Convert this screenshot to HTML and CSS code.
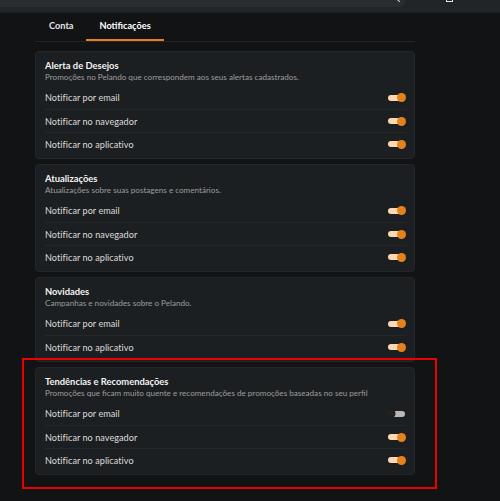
FILE: index.html
```html
<!DOCTYPE html>
<html lang="pt-BR">
<head>
<meta charset="utf-8">
<title>Notificações</title>
<link rel="stylesheet" href="styles.css">
</head>
<body>
<header class="topbar">
  <div class="search"><span class="search-clear"></span></div>
  <span class="top-icon"></span>
</header>

<main class="settings">
  <nav class="tabs">
    <a class="tab">Conta</a>
    <a class="tab tab-active">Notificações</a>
  </nav>

  <section class="card">
    <h2 class="card-title">Alerta de Desejos</h2>
    <p class="card-desc">Promoções no Pelando que correspondem aos seus alertas cadastrados.</p>
    <ul class="rows">
      <li class="row"><span>Notificar por email</span><span class="switch on"></span></li>
      <li class="row"><span>Notificar no navegador</span><span class="switch on"></span></li>
      <li class="row"><span>Notificar no aplicativo</span><span class="switch on"></span></li>
    </ul>
  </section>

  <section class="card">
    <h2 class="card-title">Atualizações</h2>
    <p class="card-desc">Atualizações sobre suas postagens e comentários.</p>
    <ul class="rows">
      <li class="row"><span>Notificar por email</span><span class="switch on"></span></li>
      <li class="row"><span>Notificar no navegador</span><span class="switch on"></span></li>
      <li class="row"><span>Notificar no aplicativo</span><span class="switch on"></span></li>
    </ul>
  </section>

  <section class="card">
    <h2 class="card-title">Novidades</h2>
    <p class="card-desc">Campanhas e novidades sobre o Pelando.</p>
    <ul class="rows">
      <li class="row"><span>Notificar por email</span><span class="switch on"></span></li>
      <li class="row"><span>Notificar no aplicativo</span><span class="switch on"></span></li>
    </ul>
  </section>

  <section class="card">
    <h2 class="card-title">Tendências e Recomendações</h2>
    <p class="card-desc">Promoções que ficam muito quente e recomendações de promoções baseadas no seu perfil</p>
    <ul class="rows">
      <li class="row"><span>Notificar por email</span><span class="switch"></span></li>
      <li class="row"><span>Notificar no navegador</span><span class="switch on"></span></li>
      <li class="row"><span>Notificar no aplicativo</span><span class="switch on"></span></li>
    </ul>
  </section>
</main>

<div class="highlight"></div>
</body>
</html>
```

FILE: styles.css
```css
* {
  box-sizing: border-box;
}

html, body {
  margin: 0;
  padding: 0;
}

body {
  position: relative;
  min-height: 501px;
  background: #121315;
  font-family: Lato, "Noto Sans", sans-serif;
  color: #dedede;
}

/* top bar */
.topbar {
  display: flex;
  align-items: flex-start;
  height: 13px;
  background: #222527;
  border-bottom: 1px solid #1b1d1f;
}

.search {
  display: flex;
  justify-content: flex-end;
  width: 405px;
  height: 7px;
  background: #2a2d2f;
  border-bottom-right-radius: 6px;
}

.search-clear {
  width: 3px;
  height: 3px;
  margin-right: 4px;
  border-left: 1px solid #d8d8d8;
  border-bottom: 1px solid #d8d8d8;
  transform: rotate(45deg) translate(-1px, -1px);
}

.top-icon {
  width: 7px;
  height: 2px;
  margin-left: 41px;
  border: 1px solid #e6e6e6;
  border-top: none;
}

/* settings column */
.settings {
  width: 380px;
  margin-left: 35px;
  display: flex;
  flex-direction: column;
  gap: 5px;
}

.tabs {
  display: flex;
  height: 29px;
  border-bottom: 1px solid #222426;
  margin-bottom: 4px;
}

.tab {
  display: flex;
  align-items: center;
  padding: 0 13px 2px 14px;
  font-size: 9.2px;
  font-weight: 700;
  color: #e4e4e4;
  border-bottom: 2px solid transparent;
}

.tab-active {
  padding: 0 13px 2px;
  color: #ffffff;
  border-bottom-color: #e9801f;
}

/* cards */
.card {
  background: #1c1f21;
  border: 1px solid #24272a;
  border-radius: 4px;
  padding: 7px 8px 3px 9px;
}

.card-title {
  margin: 0;
  font-size: 9.4px;
  line-height: 13px;
  font-weight: 700;
  color: #f2f2f2;
}

.card-desc {
  margin: 0;
  font-size: 8.1px;
  line-height: 11px;
  color: #9c9c9c;
}

.rows {
  list-style: none;
  margin: 3px 0 0;
  padding: 0;
}

.row {
  display: flex;
  align-items: center;
  justify-content: space-between;
  height: 23px;
  font-size: 9.1px;
  color: #dcdcdc;
  letter-spacing: 0.05px;
}

.row + .row {
  border-top: 1px solid #25282a;
}

/* toggle switch */
.switch {
  position: relative;
  width: 20px;
  height: 9px;
  flex: none;
}

.switch::before {
  content: "";
  position: absolute;
  left: 2px;
  right: 1px;
  top: 1.5px;
  height: 6px;
  border-radius: 3px;
  background: #bcb7b2;
}

.switch::after {
  content: "";
  position: absolute;
  left: 0;
  top: 0;
  width: 9px;
  height: 9px;
  border-radius: 50%;
  background: #1f2224;
  box-shadow: 0 0 0 0.5px #181a1c;
}

.switch.on::before {
  background: #fbd8b3;
}

.switch.on::after {
  left: 11px;
  background: #e6821c;
  box-shadow: none;
}

/* red annotation frame */
.highlight {
  position: absolute;
  left: 22px;
  top: 358px;
  width: 415px;
  height: 131px;
  border: 2px solid #ee0000;
}
```
